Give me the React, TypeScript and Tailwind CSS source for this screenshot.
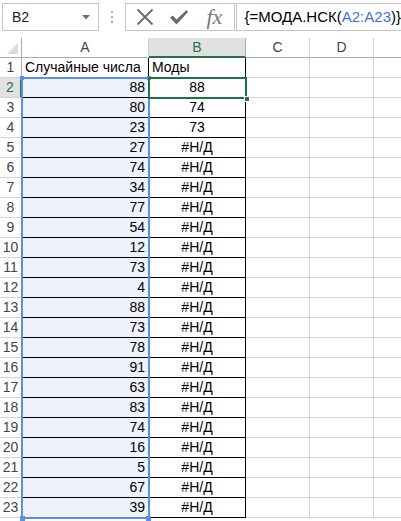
import React from "react";

const aVals = ["88","80","23","27","74","34","77","54","12","73","4","88","73","78","91","63","83","74","16","5","67","39"];
const bVals = ["88","74","73", ...Array(19).fill("#Н/Д")];

const font = { fontFamily: '"Liberation Sans", Arial, sans-serif' };

function Row({ n }: { n: number }) {
  const isHeaderSel = n === 2;
  const a = n === 1 ? "Случайные числа" : aVals[n - 2];
  const b = n === 1 ? "Моды" : bVals[n - 2];
  return (
    <div className="flex h-[20px]">
      <div
        className={
          "w-[22px] shrink-0 box-border border-b border-[#d4d4d4] flex items-center justify-center text-[14px] " +
          (isHeaderSel
            ? "bg-[#e1e1e1] text-[#217346] border-r-2 border-r-[#217346]"
            : "bg-white text-[#444] border-r border-r-[#ababab]")
        }
      >
        {n}
      </div>
      <div
        className={
          "w-[127px] shrink-0 box-border border-r border-b border-black flex items-center text-[14px] text-black " +
          (n === 1 ? "bg-white justify-start pl-[3px]" : "bg-[#edf2fc] justify-end pr-[3px]")
        }
      >
        {a}
      </div>
      <div
        className={
          "w-[97px] shrink-0 box-border border-r border-b border-black flex items-center text-[14px] text-black bg-white " +
          (n === 1 ? "justify-start pl-[3px]" : "justify-center")
        }
      >
        {b}
      </div>
      <div className="w-[64px] shrink-0 box-border border-r border-b border-[#d4d4d4] bg-white" />
      <div className="w-[64px] shrink-0 box-border border-r border-b border-[#d4d4d4] bg-white" />
      <div className="flex-1 box-border border-b border-[#d4d4d4] bg-white" />
    </div>
  );
}

export default function App() {
  return (
    <div className="w-[401px] h-[521px] overflow-hidden bg-white relative" style={font}>
      {/* Toolbar */}
      <div className="h-[38px] flex items-start pt-[3px] pl-[2px]">
        <div className="w-[103px] h-[28px] box-border border border-[#c6c6c6] flex items-center justify-between pl-[9px] pr-[8px] text-[14px] text-[#222]">
          <span>B2</span>
          <svg width="8" height="5" viewBox="0 0 8 5">
            <path d="M0 0 H8 L4 4.5 Z" fill="#6f6f6f" />
          </svg>
        </div>
        <div className="w-[29px] h-[28px] flex flex-col items-center justify-center gap-[3px]">
          <div className="w-[2px] h-[2px] bg-[#a9a9a9]" />
          <div className="w-[2px] h-[2px] bg-[#a9a9a9]" />
          <div className="w-[2px] h-[2px] bg-[#a9a9a9]" />
        </div>
        <div className="w-[113px] h-[28px] box-border border border-[#c6c6c6] flex items-center">
          <div className="w-[38px] flex justify-center">
            <svg width="18" height="18" viewBox="0 0 18 18">
              <path d="M1.5 1.5 L16.5 16.5 M16.5 1.5 L1.5 16.5" stroke="#6a6a6a" strokeWidth="1.8" fill="none" />
            </svg>
          </div>
          <div className="w-[30px] flex justify-center">
            <svg width="20" height="16" viewBox="0 0 20 16">
              <path d="M1 8.5 L4 6.5 L7.5 10.5 L17.5 1 L19 3 L7.5 15.5 Z" fill="#6a6a6a" />
            </svg>
          </div>
          <div className="w-[40px] flex justify-center">
            <span
              className="text-[22px] italic text-[#777] leading-none"
              style={{ fontFamily: '"Liberation Serif", "Times New Roman", serif' }}
            >
              fx
            </span>
          </div>
        </div>
        <div className="flex-1 h-[28px] box-border border border-[#c6c6c6] border-r-0 ml-[1px] flex items-center pl-[7px] text-[15px] text-black whitespace-nowrap">
          {"{=МОДА.НСК("}
          <span className="text-[#3d73d9]">A2:A23</span>
          {")}"}
        </div>
      </div>

      {/* Column headers */}
      <div className="flex h-[20px] text-[14px] text-[#444]">
        <div className="w-[22px] shrink-0 box-border border-r border-b border-[#ababab] bg-white relative">
          <svg className="absolute right-[3px] bottom-[3px]" width="11" height="11" viewBox="0 0 11 11">
            <path d="M11 0 V11 H0 Z" fill="#dcdcdc" />
          </svg>
        </div>
        <div className="w-[127px] shrink-0 box-border border-r border-[#d4d4d4] border-b border-b-[#ababab] bg-white flex items-center justify-center">A</div>
        <div className="w-[97px] shrink-0 box-border border-r border-[#ababab] border-b-2 border-b-[#217346] bg-[#e1e1e1] text-[#217346] flex items-center justify-center">B</div>
        <div className="w-[64px] shrink-0 box-border border-r border-[#d4d4d4] border-b border-b-[#ababab] bg-white flex items-center justify-center">C</div>
        <div className="w-[64px] shrink-0 box-border border-r border-[#d4d4d4] border-b border-b-[#ababab] bg-white flex items-center justify-center">D</div>
        <div className="flex-1 box-border border-b border-[#ababab] bg-white" />
      </div>

      {/* Rows */}
      {Array.from({ length: 23 }, (_, i) => (
        <Row key={i} n={i + 1} />
      ))}

      {/* Blue reference range A2:A23 */}
      <div className="absolute left-[21px] top-[77px] w-[129px] h-[442px] border-2 border-[#5b8ee6] pointer-events-none" />
      <div className="absolute left-[20px] top-[76px] w-[4px] h-[4px] bg-[#5b8ee6]" />
      <div className="absolute left-[147px] top-[76px] w-[4px] h-[4px] bg-[#5b8ee6]" />
      <div className="absolute left-[20px] top-[516px] w-[5px] h-[5px] bg-[#5b8ee6]" />
      <div className="absolute left-[146px] top-[516px] w-[5px] h-[5px] bg-[#5b8ee6]" />

      {/* Active cell B2 */}
      <div className="absolute left-[148px] top-[77px] w-[99px] h-[22px] border-2 border-[#217346] pointer-events-none" />
      <div className="absolute left-[244px] top-[96px] w-[6px] h-[6px] bg-[#217346] border border-white" />
    </div>
  );
}
